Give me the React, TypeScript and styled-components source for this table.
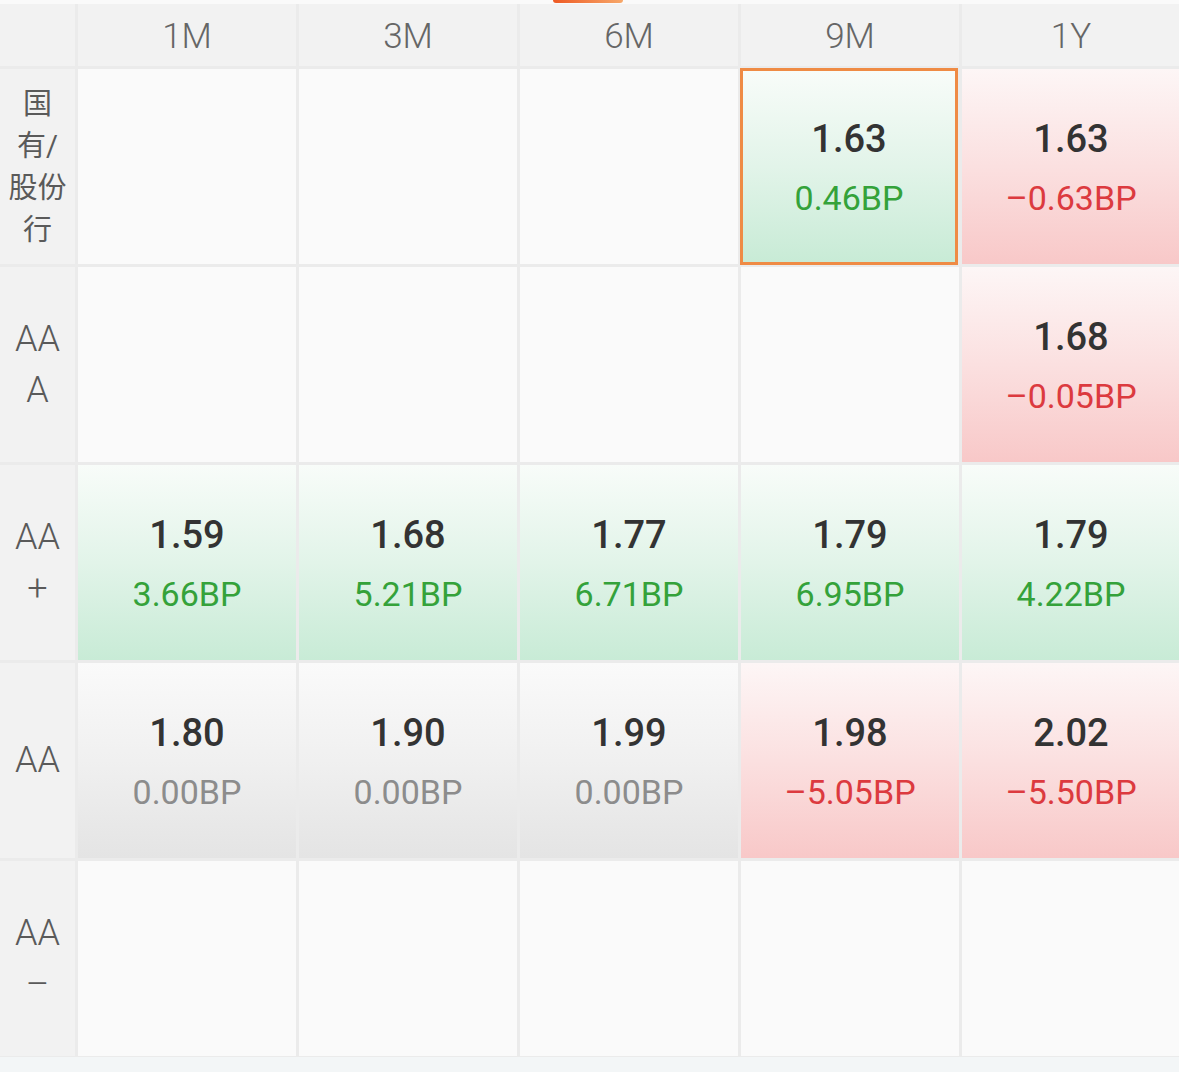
import styled, { createGlobalStyle, css } from 'styled-components';

type Tone = 'empty' | 'up' | 'down' | 'flat';

interface Quote {
  rate: string;
  change: number;
  selected?: boolean;
}

const GlobalStyle = createGlobalStyle`
  html, body {
    margin: 0;
    padding: 0;
    background: #fafafa;
    overflow: hidden;
  }
  body {
    font-family: Roboto, "Noto Sans CJK SC", "Liberation Sans", sans-serif;
  }
`;

const Page = styled.div`
  width: 1179px;
  height: 1072px;
  display: flex;
  flex-direction: column;
  background: #f3f6f7;
  overflow: hidden;
`;

const TopStrip = styled.div`
  height: 4px;
  background: #fafafa;
  display: flex;
`;

const TabMark = styled.div`
  margin-left: 553px;
  width: 70px;
  height: 3px;
  border-radius: 0 0 6px 6px;
  background: linear-gradient(90deg, #ee5a24, #f7a86a);
`;

const Board = styled.div`
  display: grid;
  grid-template-columns: 75px repeat(5, 218px);
  grid-template-rows: 62px repeat(5, 195px);
  gap: 3px;
  background: #ebebeb;
  padding-bottom: 1px;
`;

const Corner = styled.div`
  background: #f2f2f2;
`;

const HeadCell = styled.div`
  background: #f2f2f2;
  display: flex;
  align-items: center;
  justify-content: center;
  font-size: 35px;
  font-weight: 300;
  color: #666;
  padding-top: 2px;
`;

const RowLabel = styled.div<{ $cjk?: boolean }>`
  background: #f2f2f2;
  display: flex;
  flex-direction: column;
  align-items: center;
  justify-content: center;
  color: #5a5a5a;
  font-size: ${({ $cjk }) => ($cjk ? '29px' : '36px')};
  line-height: ${({ $cjk }) => ($cjk ? '42px' : '51px')};
  font-weight: ${({ $cjk }) => ($cjk ? 400 : 300)};
`;

const toneBg: Record<Tone, string> = {
  empty: '#fafafa',
  up: 'linear-gradient(180deg, #f8fcf9 0%, #e2f4e9 50%, #c8ebd6 100%)',
  down: 'linear-gradient(180deg, #fdf6f6 0%, #fbe0e0 50%, #f8c8c8 100%)',
  flat: 'linear-gradient(180deg, #fafafa 0%, #f0f0f0 50%, #e4e4e4 100%)',
};

const toneText: Record<Tone, string> = {
  empty: '#999',
  up: '#34a23a',
  down: '#dc3a3f',
  flat: '#8c8c8c',
};

const Cell = styled.div<{ $tone: Tone; $selected?: boolean }>`
  box-sizing: border-box;
  background: ${({ $tone }) => toneBg[$tone]};
  display: flex;
  flex-direction: column;
  align-items: center;
  justify-content: center;
  gap: 14px;
  ${({ $selected }) =>
    $selected &&
    css`
      border: 3px solid #ef8b45;
      margin: -1px 1px -1px -1px;
    `}
`;

const Rate = styled.div`
  font-size: 38px;
  font-weight: 500;
  color: #333;
  line-height: 46px;
  margin-bottom: 2px;
`;

const Change = styled.div<{ $tone: Tone }>`
  font-size: 34px;
  color: ${({ $tone }) => toneText[$tone]};
  line-height: 40px;
`;

const BottomStrip = styled.div`
  flex: 1;
  background: #f3f6f7;
`;

const tenors = ['1M', '3M', '6M', '9M', '1Y'];

const rows: { label: string[]; cjk?: boolean; quotes: (Quote | null)[] }[] = [
  {
    label: ['国', '有/', '股份', '行'],
    cjk: true,
    quotes: [null, null, null, { rate: '1.63', change: 0.46, selected: true }, { rate: '1.63', change: -0.63 }],
  },
  { label: ['AA', 'A'], quotes: [null, null, null, null, { rate: '1.68', change: -0.05 }] },
  {
    label: ['AA', '+'],
    quotes: [
      { rate: '1.59', change: 3.66 },
      { rate: '1.68', change: 5.21 },
      { rate: '1.77', change: 6.71 },
      { rate: '1.79', change: 6.95 },
      { rate: '1.79', change: 4.22 },
    ],
  },
  {
    label: ['AA'],
    quotes: [
      { rate: '1.80', change: 0 },
      { rate: '1.90', change: 0 },
      { rate: '1.99', change: 0 },
      { rate: '1.98', change: -5.05 },
      { rate: '2.02', change: -5.5 },
    ],
  },
  { label: ['AA', '–'], quotes: [null, null, null, null, null] },
];

const toneOf = (q: Quote | null): Tone => {
  if (!q) return 'empty';
  if (q.change > 0) return 'up';
  if (q.change < 0) return 'down';
  return 'flat';
};

const formatChange = (n: number) => (n < 0 ? `–${Math.abs(n).toFixed(2)}BP` : `${n.toFixed(2)}BP`);

const App = () => {
  return (
    <Page>
      <GlobalStyle />
      <TopStrip>
        <TabMark />
      </TopStrip>
      <Board>
        <Corner />
        {tenors.map((t) => (
          <HeadCell key={t}>{t}</HeadCell>
        ))}
        {rows.map((row, ri) => [
          <RowLabel key={`l${ri}`} $cjk={row.cjk}>
            {row.label.map((line, i) => (
              <span key={i}>{line}</span>
            ))}
          </RowLabel>,
          ...row.quotes.map((q, ci) => {
            const tone = toneOf(q);
            return (
              <Cell key={`${ri}-${ci}`} $tone={tone} $selected={q?.selected}>
                {q && (
                  <>
                    <Rate>{q.rate}</Rate>
                    <Change $tone={tone}>{formatChange(q.change)}</Change>
                  </>
                )}
              </Cell>
            );
          }),
        ])}
      </Board>
      <BottomStrip />
    </Page>
  );
};

export default App;
